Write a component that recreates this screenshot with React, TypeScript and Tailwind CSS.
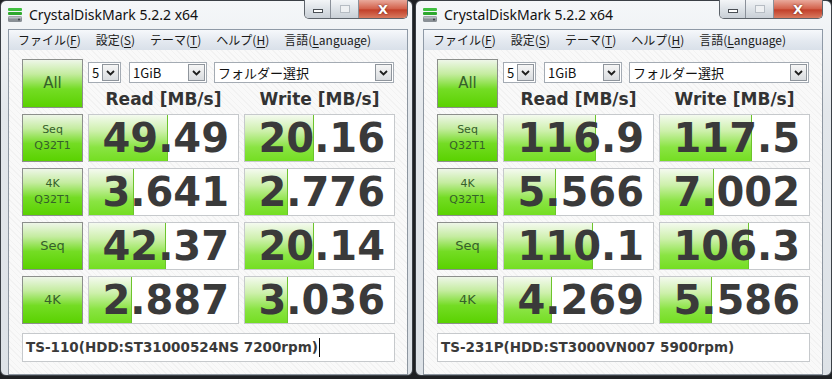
import React from 'react';

type Row = { label: string[]; read: string; rp: number; write: string; wp: number };

type WinData = { rows: Row[]; comment: string; cursor?: boolean; wide?: boolean };

const leftWin: WinData = {
  rows: [
    { label: ['Seq', 'Q32T1'], read: '49.49', rp: 53, write: '20.16', wp: 46 },
    { label: ['4K', 'Q32T1'], read: '3.641', rp: 30, write: '2.776', wp: 29 },
    { label: ['Seq'], read: '42.37', rp: 52, write: '20.14', wp: 46 },
    { label: ['4K'], read: '2.887', rp: 29, write: '3.036', wp: 29 },
  ],
  comment: 'TS-110(HDD:ST31000524NS 7200rpm)',
  cursor: true,
};

const rightWin: WinData = {
  rows: [
    { label: ['Seq', 'Q32T1'], read: '116.9', rp: 62, write: '117.5', wp: 62 },
    { label: ['4K', 'Q32T1'], read: '5.566', rp: 35, write: '7.002', wp: 36 },
    { label: ['Seq'], read: '110.1', rp: 60, write: '106.3', wp: 60 },
    { label: ['4K'], read: '4.269', rp: 32, write: '5.586', wp: 35 },
  ],
  comment: 'TS-231P(HDD:ST3000VN007 5900rpm)',
  wide: true,
};

const menus: [string, string, string][] = [
  ['ファイル(', 'F', ')'],
  ['設定(', 'S', ')'],
  ['テーマ(', 'T', ')'],
  ['ヘルプ(', 'H', ')'],
  ['言語(', 'L', 'anguage)'],
];

function AppIcon() {
  return (
    <svg width="16" height="16" viewBox="0 0 16 16">
      <rect x="1" y="1" width="14" height="3" rx="1" fill="#3fbf3f" />
      <rect x="1" y="5" width="14" height="3" rx="1" fill="#2ea82e" />
      <rect x="1" y="9" width="14" height="6" rx="1.5" fill="#8a9096" />
      <rect x="1.5" y="9.5" width="13" height="2" rx="1" fill="#b8bdc2" />
      <circle cx="12" cy="12.5" r="1" fill="#3b3f44" />
    </svg>
  );
}

function Chevron() {
  return (
    <svg width="9" height="6" viewBox="0 0 9 6">
      <path d="M1 1 L4.5 4.5 L8 1" fill="none" stroke="#1e1e1e" strokeWidth="1.8" />
    </svg>
  );
}

function Select({ w, text }: { w: string; text: string }) {
  return (
    <div className={`${w} h-[21px] flex items-center bg-white border border-[#a4abb3]`}>
      <span className="flex-1 pl-[3px] text-[13px] text-[#111] leading-none font-['Noto_Sans_CJK_JP',sans-serif]">
        {text}
      </span>
      <div className="w-[17px] h-[17px] mr-[1px] flex items-center justify-center border border-[#8f959c] bg-[linear-gradient(to_bottom,#f6f6f6,#d9dcdf)]">
        <Chevron />
      </div>
    </div>
  );
}

function LabelBtn({ lines, h }: { lines: string[]; h: string }) {
  const size = lines[0] === 'All' ? 'text-[15px]' : lines.length > 1 ? 'text-[11px]' : 'text-[13px]';
  return (
    <div
      className={`w-[61px] ${h} flex flex-col items-center justify-center border border-[#8c8f8c] bg-[linear-gradient(to_bottom,#eef6e8_0%,#c4ec9f_30%,#74dc24_62%,#5ad200_100%)] ${size} leading-[1.45] text-[#35602a] font-['DejaVu_Sans',sans-serif]`}
    >
      {lines.map((l) => (
        <span key={l}>{l}</span>
      ))}
    </div>
  );
}

function Cell({ value, pct }: { value: string; pct: number }) {
  return (
    <div className="relative w-[151px] h-[48px] bg-white border border-[#c6c9cc] overflow-hidden flex items-center justify-end">
      <div
        className="absolute left-0 top-0 bottom-0 border-r border-[#6cc42c] bg-[linear-gradient(to_bottom,#f4faef_0%,#cdf0ab_35%,#8ae443_70%,#74de22_100%)]"
        style={{ width: `${pct}%` }}
      />
      <span className="relative pr-[9px] text-[40px] font-bold leading-none text-[#3a3a3a] font-['DejaVu_Sans',sans-serif]">
        {value}
      </span>
    </div>
  );
}

function CaptionButtons() {
  return (
    <div className="flex h-[19px] -mt-px rounded-b-[5px] overflow-hidden border border-t-0 border-[#5d636a]">
      <div className="w-[26px] flex items-center justify-center bg-[linear-gradient(to_bottom,#f3f5f7,#dde2e7_50%,#c9cfd6)] border-r border-[#8a9099]">
        <div className="w-[10px] h-[4px] bg-white border border-[#4a4f55] mt-[4px]" />
      </div>
      <div className="w-[28px] flex items-center justify-center bg-[linear-gradient(to_bottom,#f3f5f7,#dde2e7_50%,#c9cfd6)] border-r border-[#8a9099]">
        <div className="w-[10px] h-[8px] border border-[#b6bcc3] bg-[#eef0f2]" />
      </div>
      <div className="w-[48px] flex items-center justify-center bg-[linear-gradient(to_bottom,#e9a99b,#d3624c_48%,#c2402a_55%,#d97a5f)]">
        <span className="text-[13px] font-bold leading-none text-white font-['DejaVu_Sans',sans-serif] [text-shadow:0_0_2px_#5a1a10]">
          X
        </span>
      </div>
    </div>
  );
}

function Window({ data }: { data: WinData }) {
  return (
    <div
      className={`${data.wide ? 'w-[417px] pr-[8px]' : 'w-[413px] pr-[4px]'} h-[376px] shrink-0 flex flex-col rounded-[6px] border border-[#3b4046] pl-[7px] bg-[linear-gradient(to_bottom,#f5f7f9,#e3e7eb_30%,#dde2e7)]`}
    >
      {/* title bar */}
      <div className="h-[28px] w-[400px] flex items-start justify-between">
        <div className="flex items-center gap-[6px] -ml-px mt-[6px]">
          <AppIcon />
          <span className="text-[14px] leading-none text-[#111] font-['Noto_Sans',sans-serif]">
            CrystalDiskMark 5.2.2 x64
          </span>
        </div>
        <CaptionButtons />
      </div>

      {/* menu */}
      <div className="h-[21px] w-[400px] flex items-center gap-[15px] pl-[9px] border-t border-l border-r border-[#8e99a6] bg-[linear-gradient(to_bottom,#f6f8fb,#e4e9f0_55%,#d9e0e9)] text-[12px] leading-none text-[#1a1a1a] font-['Noto_Sans_CJK_JP',sans-serif]">
        {menus.map(([a, u, b]) => (
          <span key={a}>
            {a}
            <span className="underline underline-offset-2">{u}</span>
            {b}
          </span>
        ))}
      </div>

      {/* client */}
      <div className="w-[400px] flex-1 border border-t-0 border-[#8d96a0] pl-[13px] pr-[12px] pt-[9px] bg-[repeating-linear-gradient(45deg,#f9f9f9_0px,#f9f9f9_3px,#f2f2f2_3px,#f2f2f2_4px)] flex flex-col">
        <div className="flex gap-[5px] h-[49px]">
          <LabelBtn lines={['All']} h="h-[49px]" />
          <div className="flex flex-col">
            <div className="flex mt-[3px] h-[21px]">
              <Select w="w-[33px]" text="5" />
              <div className="w-[8px]" />
              <Select w="w-[78px]" text="1GiB" />
              <div className="w-[7px]" />
              <Select w="w-[180px]" text="フォルダー選択" />
            </div>
            <div className="flex gap-[5px] flex-1 items-end text-[17px] font-bold leading-none text-[#333] font-['DejaVu_Sans',sans-serif]">
              <div className="w-[151px] text-center">Read [MB/s]</div>
              <div className="w-[151px] text-center">Write [MB/s]</div>
            </div>
          </div>
        </div>

        <div className="flex flex-col gap-[6px] mt-[6px]">
          {data.rows.map((r) => (
            <div key={r.read} className="flex gap-[5px]">
              <LabelBtn lines={r.label} h="h-[48px]" />
              <Cell value={r.read} pct={r.rp} />
              <Cell value={r.write} pct={r.wp} />
            </div>
          ))}
        </div>

        <div className="mt-[9px] h-[29px] w-[373px] bg-white border border-[#c6c9cc] flex items-center pl-[3px]">
          <span className="text-[13.5px] font-bold leading-none text-[#3a3a3a] font-['DejaVu_Sans',sans-serif]">
            {data.comment}
          </span>
          {data.cursor && <span className="ml-[1px] w-px h-[19px] bg-black" />}
        </div>
      </div>
    </div>
  );
}

export default function App() {
  return (
    <div className="w-[832px] h-[379px] overflow-hidden bg-[#1f2124] flex gap-[2px]">
      <Window data={leftWin} />
      <Window data={rightWin} />
    </div>
  );
}
